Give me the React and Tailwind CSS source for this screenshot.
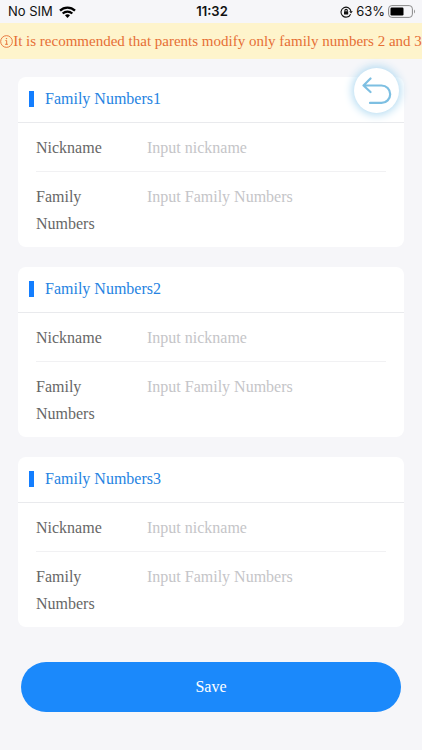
import React from 'react';

const serif = "font-['Liberation_Serif',serif]";

function StatusBar() {
  return (
    <header className="grid h-[23px] grid-cols-3 items-center pl-2 pr-1.5 font-['Inter',sans-serif] text-[13px] leading-none text-[#111]">
      <div className="flex items-center gap-[6px]">
        <span>No SIM</span>
        <svg width="17" height="12" viewBox="0 0 17 12" fill="none" stroke="#000" strokeWidth="2.3" aria-hidden="true">
          <path d="M1 4.6C5.2.5 11.800.5 16 4.600" />
          <path d="M3.700 7.500C6.400 4.900 10.600 4.900 13.300 7.500" />
          <path d="M8.500 12 6 9.300C7.400 8 9.600 8 11 9.300Z" fill="#000" stroke="none" />
        </svg>
      </div>
      <span className="text-center font-semibold">11:32</span>
      <div className="flex items-center justify-end gap-[3px]">
        <svg width="13" height="12" viewBox="0 0 13 12" fill="none" stroke="#111" strokeWidth="1.1" aria-hidden="true">
          <path d="M10.600 8.200A5 5 0 1 1 11 5.500" />
          <path d="M9.200 5.200h3.600L11 7.600Z" fill="#111" stroke="none" />
          <path d="M4.900 5.600V4.600a1.200 1.200 0 0 1 2.400 0v1" />
          <rect x="4" y="5.300" width="4.200" height="3.200" rx=".5" fill="#111" stroke="none" />
        </svg>
        <span>63%</span>
        <svg width="28" height="13" viewBox="0 0 28 13" aria-hidden="true">
          <rect x=".6" y=".6" width="23.800" height="11.800" rx="3.200" fill="none" stroke="#888" />
          <rect x="2.500" y="2.500" width="13" height="8" rx="1.200" fill="#000" />
          <path d="M26 4.500c1.400.5 1.400 3.500 0 4Z" fill="#999" />
        </svg>
      </div>
    </header>
  );
}

function Notice() {
  return (
    <p className="flex h-9 items-center justify-center whitespace-nowrap bg-[#fef4cc] text-[15px] text-[#e66f35]">
      <svg width="13" height="13" viewBox="0 0 14 14" fill="none" stroke="currentColor" className="shrink-0" aria-hidden="true">
        <circle cx="7" cy="7" r="6.300" />
        <path d="M5.800 6h1.400v4M5.500 10h3" />
        <circle cx="7" cy="3.900" r=".8" fill="currentColor" stroke="none" />
      </svg>
      <span>It is recommended that parents modify only family numbers 2 and 3</span>
    </p>
  );
}

function Field({ id, label, placeholder }) {
  return (
    <div className="flex items-start pb-[10px] pt-[11px] leading-[27px]">
      <label htmlFor={id} className="w-[111px] shrink-0 pr-6 text-[#666]">{label}</label>
      <input
        id={id}
        type="text"
        placeholder={placeholder}
        className="h-[27px] min-w-0 flex-1 bg-transparent text-[#444] outline-none placeholder:text-[#c5c5c8]"
      />
    </div>
  );
}

function NumberCard({ index }) {
  return (
    <section className="rounded-lg bg-white">
      <h2 className="flex h-[46px] items-center gap-[11px] border-b border-[#e9eaed] pb-0.5 pl-[11px] text-base text-[#2583e2]">
        <span className="h-4 w-[5px] bg-[#137eff]" />
        Family Numbers{index}
      </h2>
      <div className="divide-y divide-[#f1f1f3] px-[18px]">
        <Field id={`nickname-${index}`} label="Nickname" placeholder="Input nickname" />
        <Field id={`number-${index}`} label="Family Numbers" placeholder="Input Family Numbers" />
      </div>
    </section>
  );
}

export default function App() {
  return (
    <div className={`${serif} relative min-h-screen bg-[#f6f6f9] text-base`}>
      <StatusBar />
      <Notice />
      <button
        type="button"
        aria-label="Back"
        className="absolute right-[23px] top-[68px] flex size-[45px] items-center justify-center rounded-full bg-white shadow-[0_0_9px_2px_#b5dcf2]"
      >
        <svg width="30" height="28" viewBox="0 0 30 28" fill="none" stroke="#7dbfe2" strokeWidth="2.200" strokeLinecap="round" strokeLinejoin="round" aria-hidden="true">
          <path d="M8.500 1.500 1.500 8.500l7 6.500M1.500 8.500H19.500a8.700 8.700 0 0 1 0 17.400H8" />
        </svg>
      </button>
      <main className="px-[18px] pt-[18px]">
        <form onSubmit={(event) => event.preventDefault()}>
          <div className="flex flex-col gap-5">
            <NumberCard index={1} />
            <NumberCard index={2} />
            <NumberCard index={3} />
          </div>
          <div className="px-[3px] pb-9 pt-[35px]">
            <button type="submit" className="h-[50px] w-full rounded-full bg-[#1b89fb] text-base text-white">
              Save
            </button>
          </div>
        </form>
      </main>
    </div>
  );
}
